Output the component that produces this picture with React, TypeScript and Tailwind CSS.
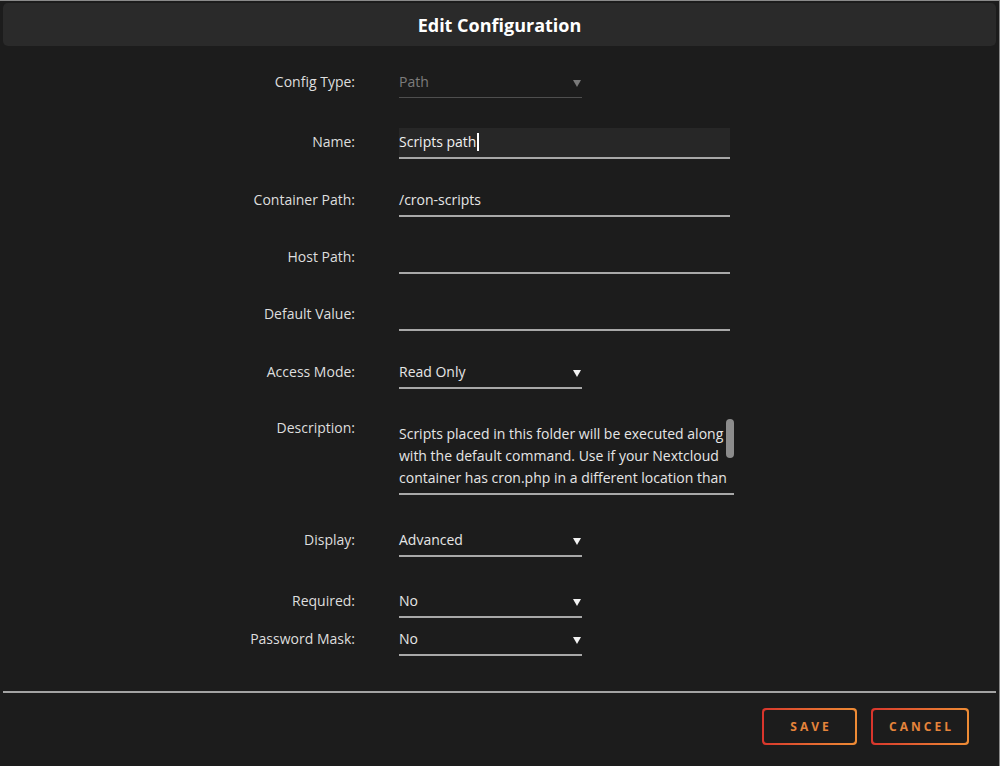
import React from "react"

const font = { fontFamily: "'Open Sans', 'Noto Sans', sans-serif" }

function Arrow({ dim }: { dim?: boolean }) {
  return (
    <svg width="8" height="8" viewBox="0 0 8 8" className="shrink-0">
      <polygon points="0,1 8,1 4,8" fill={dim ? "#7a7a7a" : "#f2f2f2"} />
    </svg>
  )
}

function Label({ children, pt = "" }: { children: React.ReactNode; pt?: string }) {
  return (
    <div className={`w-[355px] shrink-0 text-right text-[14px] leading-[20px] text-[#dedede] ${pt}`}>
      {children}
    </div>
  )
}

function TextField({ value }: { value?: string }) {
  return (
    <div className="ml-[44px] w-[331px] border-b-2 border-[#a8a8a8] pb-[5px] text-[14px] leading-[20px] text-[#e6e6e6]">
      {value ? value : <span>&nbsp;</span>}
    </div>
  )
}

function SelectField({ value, dim }: { value: string; dim?: boolean }) {
  return (
    <div
      className={`ml-[44px] flex w-[183px] items-center justify-between pb-[5px] text-[14px] leading-[20px] ${
        dim ? "border-b border-[#4e4e4e] text-[#7c7c7c]" : "border-b-2 border-[#a8a8a8] text-[#e6e6e6]"
      }`}
    >
      <span>{value}</span>
      <span className="pr-[1px] pt-[1px]">
        <Arrow dim={dim} />
      </span>
    </div>
  )
}

function Button({ children, w }: { children: React.ReactNode; w: string }) {
  return (
    <div className={`rounded-[4px] bg-gradient-to-r from-[#d8342c] to-[#ee8c35] p-[2px] ${w}`}>
      <div className="flex h-[33px] items-center justify-center rounded-[3px] bg-[#1c1c1c] pl-[3px] text-[12px] font-bold tracking-[3px] text-[#e5843b]">
        {children}
      </div>
    </div>
  )
}

export default function App() {
  return (
    <div
      className="h-[766px] w-[1000px] overflow-hidden border-t border-r border-[#8a8a8a] bg-[#1c1c1c]"
      style={font}
    >
      <div className="mx-[3px] mt-[2px] flex h-[43px] items-center justify-center rounded-[5px] bg-[#2a2a2a] pt-[2px]">
        <h1 className="text-[18px] font-bold text-white">Edit Configuration</h1>
      </div>

      <div className="flex flex-col">
        <div className="mt-[26px] flex items-start">
          <Label>Config Type:</Label>
          <SelectField value="Path" dim />
        </div>

        <div className="mt-[30px] flex items-start">
          <Label pt="pt-[4px]">Name:</Label>
          <div className="ml-[44px] flex w-[331px] items-center border-b-2 border-[#a8a8a8] bg-[#272727] pt-[4px] pb-[5px] text-[14px] leading-[20px] text-[#f0f0f0]">
            <span>Scripts path</span>
            <span className="ml-[1px] inline-block h-[18px] w-[2px] bg-white" />
          </div>
        </div>

        <div className="mt-[31px] flex items-start">
          <Label>Container Path:</Label>
          <TextField value="/cron-scripts" />
        </div>

        <div className="mt-[30px] flex items-start">
          <Label>Host Path:</Label>
          <TextField />
        </div>

        <div className="mt-[30px] flex items-start">
          <Label>Default Value:</Label>
          <TextField />
        </div>

        <div className="mt-[31px] flex items-start">
          <Label>Access Mode:</Label>
          <SelectField value="Read Only" />
        </div>

        <div className="mt-[29px] flex items-start">
          <Label>Description:</Label>
          <div className="relative ml-[44px] w-[335px] border-b-2 border-[#a8a8a8] pt-[5px] pb-[4px] text-[14px] leading-[22px] text-[#e6e6e6]">
            <div className="h-[66px] overflow-hidden whitespace-nowrap pr-[12px]">
              <div>Scripts placed in this folder will be executed along</div>
              <div>with the default command. Use if your Nextcloud</div>
              <div>container has cron.php in a different location than</div>
            </div>
            <div className="absolute right-0 top-[1px] h-[39px] w-[8px] rounded-full bg-[#8c8c8c]" />
          </div>
        </div>

        <div className="mt-[35px] flex items-start">
          <Label>Display:</Label>
          <SelectField value="Advanced" />
        </div>

        <div className="mt-[34px] flex items-start">
          <Label>Required:</Label>
          <SelectField value="No" />
        </div>

        <div className="mt-[11px] flex items-start">
          <Label>Password Mask:</Label>
          <SelectField value="No" />
        </div>
      </div>

      <div className="mx-[3px] mt-[35px] h-[2px] bg-[#a3a3a3]" />

      <div className="mt-[15px] flex justify-end gap-[14px] pr-[30px]">
        <Button w="w-[95px]">SAVE</Button>
        <Button w="w-[98px]">CANCEL</Button>
      </div>
    </div>
  )
}
